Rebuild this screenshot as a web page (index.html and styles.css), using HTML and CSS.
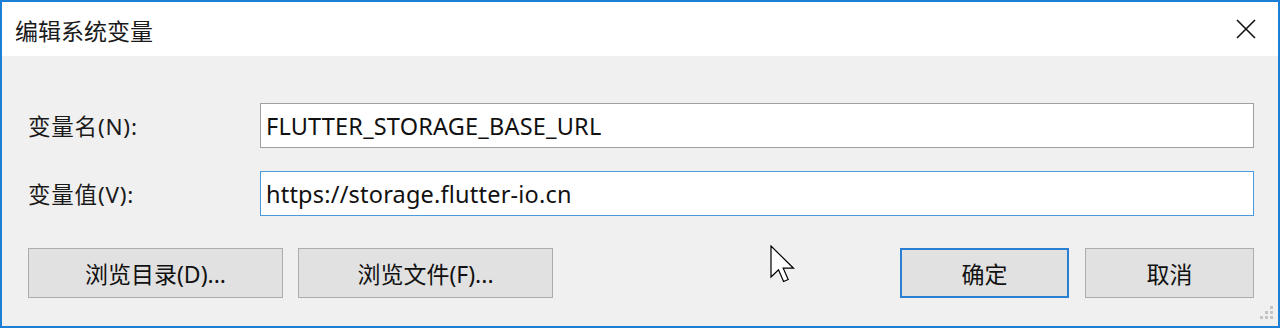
FILE: index.html
```html
<!DOCTYPE html>
<html lang="zh-CN">
<head>
  <meta charset="UTF-8" />
  <title>编辑系统变量</title>
  <link rel="stylesheet" href="styles.css">
</head>
<body>
  <div class="window">
    <div class="titlebar">
      <span class="title">编辑系统变量</span>
      <svg class="close" width="20" height="20" viewBox="0 0 20 20">
        <path d="M1 1 L19 19 M19 1 L1 19" stroke="#111" stroke-width="1.6" fill="none"/>
      </svg>
    </div>

    <div class="content">
      <div class="form">
        <label class="field-label" for="varName">变量名(N):</label>
        <input class="field" type="text" id="varName" value="FLUTTER_STORAGE_BASE_URL" />

        <label class="field-label" for="varValue">变量值(V):</label>
        <input class="field focused" type="text" id="varValue" value="https://storage.flutter-io.cn" />
      </div>

      <div class="actions">
        <div class="left-buttons">
          <button class="btn wide">浏览目录(D)...</button>
          <button class="btn wide">浏览文件(F)...</button>
        </div>
        <div class="right-buttons">
          <button class="btn default">确定</button>
          <button class="btn">取消</button>
        </div>
      </div>
    </div>

    <!-- mouse pointer -->
    <svg class="cursor" width="28" height="40" viewBox="0 0 28 40">
      <path d="M1 1 L1 32 L8.5 24.8 L13.6 36.5 L18.2 34.5 L13.2 23.2 L23.5 23.2 Z" fill="#fff" stroke="#000" stroke-width="1.2" stroke-linejoin="miter"/>
    </svg>

    <!-- size grip -->
    <svg class="grip" width="14" height="14" viewBox="0 0 14 14">
      <rect x="10" y="0" width="3" height="3" fill="#c4c4c4"/>
      <rect x="5" y="5" width="3" height="3" fill="#c4c4c4"/>
      <rect x="10" y="5" width="3" height="3" fill="#c4c4c4"/>
      <rect x="0" y="10" width="3" height="3" fill="#c4c4c4"/>
      <rect x="5" y="10" width="3" height="3" fill="#c4c4c4"/>
      <rect x="10" y="10" width="3" height="3" fill="#c4c4c4"/>
    </svg>
  </div>
</body>
</html>
```

FILE: styles.css
```css
* {
  box-sizing: border-box;
}
body {
  margin: 0;
  font-family: "Noto Sans", "Noto Sans CJK SC", sans-serif;
  background-color: #f0f0f0;
}
.window {
  position: relative;
  width: 1280px;
  height: 328px;
  border: 2px solid #1c7fd6;
  background-color: #f0f0f0;
  display: flex;
  flex-direction: column;
}
.titlebar {
  height: 54px;
  background-color: #fff;
  display: flex;
  align-items: center;
  justify-content: space-between;
  padding: 0 22px 0 13px;
}
.title {
  font-family: "Noto Sans CJK SC", sans-serif;
  font-size: 23px;
  color: #1a1a1a;
  margin-top: 2px;
}
.close {
  display: block;
}
.content {
  flex: 1;
  padding: 47px 24px 0 26px;
}
.form {
  display: grid;
  grid-template-columns: 232px 1fr;
  row-gap: 23px;
  align-items: center;
}
.field-label {
  font-family: "Noto Sans", "Noto Sans CJK SC", sans-serif;
  font-size: 22.5px;
  letter-spacing: 0.8px;
  color: #1a1a1a;
}
.field {
  height: 45px;
  border: 1px solid #a0a0a0;
  background-color: #fff;
  padding: 0 5px;
  font-family: "Noto Sans", sans-serif;
  font-size: 23.5px;
  letter-spacing: 0.2px;
  color: #111;
  outline: none;
}
.field.focused {
  border-color: #4a9ae0;
}
.actions {
  margin-top: 32px;
  display: flex;
  justify-content: space-between;
}
.left-buttons, .right-buttons {
  display: flex;
  gap: 15px;
}
.right-buttons {
  gap: 16px;
}
.btn {
  height: 50px;
  width: 169px;
  border: 1px solid #adadad;
  background-color: #e1e1e1;
  font-family: "Noto Sans", "Noto Sans CJK SC", sans-serif;
  font-size: 23px;
  color: #111;
  padding: 0;
}
.btn.wide {
  width: 255px;
}
.btn.default {
  border: 2px solid #2b7fd3;
}
.cursor {
  position: absolute;
  left: 768px;
  top: 243px;
}
.grip {
  position: absolute;
  right: 4px;
  bottom: 6px;
}
```
